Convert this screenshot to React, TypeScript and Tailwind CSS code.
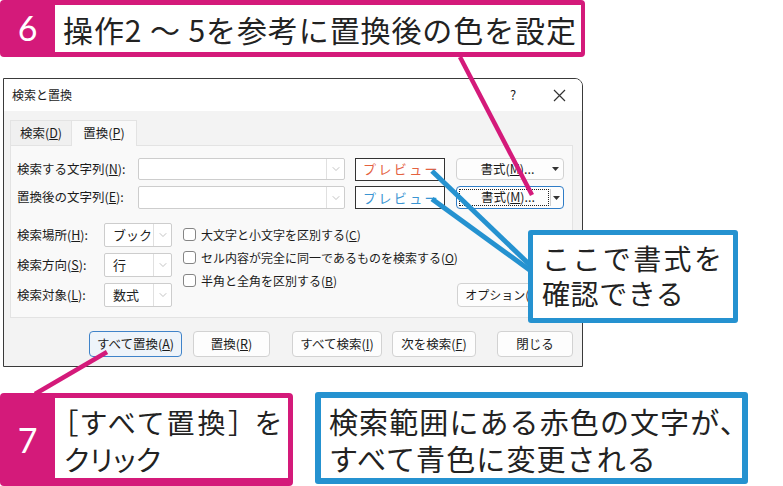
import React from 'react';
import { ChevronDown } from 'lucide-react';

const MAGENTA = '#d41a7a';
const BLUE = '#2592d0';

const Caret = () => (
  <svg width="7" height="4" viewBox="0 0 7 4">
    <polygon points="0,0 7,0 3.5,4" fill="#333" />
  </svg>
);

const Combo: React.FC<{ width: string; value?: string; arrow: string }> = ({ width, value, arrow }) => (
  <div className={`${width} flex h-full bg-white border border-[#cdcdcd] rounded-[2px]`}>
    <div className="flex-1 flex items-center pl-[8px] text-[13px] text-[#222]">{value}</div>
    <div className={`${arrow} flex items-center justify-center border-l border-[#e0e0e0]`}>
      <ChevronDown size={12} strokeWidth={1.2} color="#9a9a9a" />
    </div>
  </div>
);

const DlgButton: React.FC<{ w: string; primary?: boolean; children: React.ReactNode }> = ({ w, primary, children }) => (
  <div
    className={`${w} h-[26px] flex items-center justify-center rounded-[4px] text-[12.5px] text-[#1b1b1b] ${
      primary ? 'border border-[#3f83c9] bg-[#eef4fa]' : 'border border-[#d2d2d2] bg-[#fdfdfd]'
    }`}
  >
    {children}
  </div>
);

const Check: React.FC<{ children: React.ReactNode }> = ({ children }) => (
  <div className="h-[23px] flex items-center gap-[5px] text-[12px] text-[#1b1b1b] whitespace-nowrap">
    <span className="shrink-0 w-[13px] h-[13px] rounded-[3px] border border-[#858585] bg-white" />
    <span>{children}</span>
  </div>
);

export default function App() {
  return (
    <div className="relative w-[783px] h-[486px] overflow-hidden bg-white font-['Noto_Sans_CJK_JP',sans-serif]">
      {/* Step 6 callout */}
      <div className="w-[585px] h-[57px] flex rounded-[4px] pt-[5px] pb-[5px] pr-[4px]" style={{ background: MAGENTA }}>
        <div className="w-[55px] flex items-center justify-center text-white text-[34px] leading-none pb-[2px] font-['Lato',sans-serif]">
          6
        </div>
        <div className="flex-1 bg-white flex items-center pl-[8px] text-[30px] text-[#222] leading-none tracking-[0.9px] whitespace-nowrap">
          操作2 ～ 5を参考に置換後の色を設定
        </div>
      </div>

      {/* Dialog */}
      <div className="ml-[3px] mt-[21px] w-[580px] h-[289px] border border-[#3a3a3a] rounded-tr-[8px] overflow-hidden flex flex-col">
        <div className="h-[32px] bg-white flex items-center text-[12px] text-[#1b1b1b]">
          <span className="pl-[8px]">検索と置換</span>
          <span className="flex-1" />
          <span className="w-[46px] text-center text-[13px]">?</span>
          <span className="w-[46px] flex items-center justify-center">
            <svg width="13" height="13" viewBox="0 0 13 13">
              <path d="M1 1L12 12M12 1L1 12" stroke="#333" strokeWidth="1.2" fill="none" />
            </svg>
          </span>
        </div>
        <div className="flex-1 bg-[#f3f3f3] pl-[6px] pr-[9px] flex flex-col">
          {/* tabs */}
          <div className="mt-[9px] h-[25px] flex text-[12.5px] text-[#1b1b1b]">
            <div className="w-[62px] flex items-center justify-center border border-b-0 border-[#e3e3e3] bg-[#f0f0f0]">
              検索(<u>D</u>)
            </div>
            <div className="w-[65px] flex items-center justify-center border border-b-0 border-l-0 border-[#e3e3e3] bg-[#f9f9f9] relative z-10 h-[26px]">
              置換(<u>P</u>)
            </div>
          </div>
          {/* panel */}
          <div className="h-[173px] bg-[#f9f9f9] border border-[#e3e3e3] pl-[6px] pt-[12px] flex flex-col">
            <div className="h-[22px] flex items-center text-[12.5px] text-[#1b1b1b]">
              <span className="w-[121px]">検索する文字列(<u>N</u>):</span>
              <Combo width="w-[207px]" arrow="w-[18px]" />
              <div className="ml-[10px] w-[90px] h-[23px] border border-[#333] bg-white flex items-center pl-[7px] text-[13px] tracking-[2.4px] text-[#e4623f]">
                プレビュー
              </div>
              <div className="ml-[11px] w-[108px] h-full flex bg-[#fdfdfd] border border-[#d2d2d2] rounded-[4px]">
                <div className="flex-1 flex items-center justify-center pl-[8px]">
                  書式(<u>M</u>)...
                </div>
                <div className="w-[13px] flex items-center justify-center pr-[2px]">
                  <Caret />
                </div>
              </div>
            </div>
            <div className="mt-[6px] h-[23px] flex items-center text-[12.5px] text-[#1b1b1b]">
              <span className="w-[121px]">置換後の文字列(<u>E</u>):</span>
              <Combo width="w-[207px]" arrow="w-[18px]" />
              <div className="ml-[10px] w-[90px] h-[23px] border border-[#333] bg-white flex items-center pl-[7px] text-[13px] tracking-[2.4px] text-[#3a95d2]">
                プレビュー
              </div>
              <div className="ml-[11px] w-[108px] h-full flex bg-[#fdfdfd] border border-[#2f7cc6] rounded-[4px] p-[2px]">
                <div className="flex-1 flex items-center justify-center pl-[8px] border border-dotted border-[#222]">
                  書式(<u>M</u>)...
                </div>
                <div className="w-[11px] flex items-center justify-center border-l border-[#cfcfcf] ml-[1px]">
                  <Caret />
                </div>
              </div>
            </div>
            {/* options */}
            <div className="mt-[14px] flex text-[12.5px] text-[#1b1b1b]">
              <div className="shrink-0 flex flex-col gap-[6px]">
                {[
                  ['検索場所', 'H', 'ブック'],
                  ['検索方向', 'S', '行'],
                  ['検索対象', 'L', '数式'],
                ].map(([label, key, val]) => (
                  <div key={key} className="h-[24px] flex items-center">
                    <span className="w-[87px]">
                      {label}(<u>{key}</u>):
                    </span>
                    <Combo width="w-[68px]" value={val} arrow="w-[18px]" />
                  </div>
                ))}
              </div>
              <div className="flex-1 min-w-0 ml-[11px] flex flex-col">
                <Check>大文字と小文字を区別する(<u>C</u>)</Check>
                <Check>セル内容が完全に同一であるものを検索する(<u>O</u>)</Check>
                <Check>半角と全角を区別する(<u>B</u>)</Check>
              </div>
              <div className="shrink-0 mr-[7px] self-end w-[108px] h-[24px] flex items-center justify-center bg-[#fdfdfd] border border-[#d2d2d2] rounded-[4px] text-[12px] whitespace-nowrap">
                オプション(<u>T</u>) &lt;&lt;
              </div>
            </div>
          </div>
          {/* buttons */}
          <div className="mt-[13px] flex">
            <div className="ml-[79px]">
              <DlgButton w="w-[93px]" primary>
                すべて置換(<u>A</u>)
              </DlgButton>
            </div>
            <div className="ml-[11px]">
              <DlgButton w="w-[77px]">
                置換(<u>R</u>)
              </DlgButton>
            </div>
            <div className="ml-[22px]">
              <DlgButton w="w-[90px]">
                すべて検索(<u>I</u>)
              </DlgButton>
            </div>
            <div className="ml-[10px]">
              <DlgButton w="w-[84px]">
                次を検索(<u>F</u>)
              </DlgButton>
            </div>
            <div className="ml-[21px]">
              <DlgButton w="w-[76px]">閉じる</DlgButton>
            </div>
          </div>
        </div>
      </div>

      {/* bottom callouts */}
      <div className="mt-[25px] flex items-start gap-[22px]">
        <div className="mt-[1px] w-[293px] h-[93px] flex rounded-[4px] pt-[5px] pb-[8px] pr-[5px]" style={{ background: MAGENTA }}>
          <div className="w-[55px] flex items-center justify-center text-white text-[34px] leading-none pt-[4px] font-['Lato',sans-serif]">
            7
          </div>
          <div className="flex-1 bg-white pl-[9px] pt-[6px] text-[28px] leading-[37px] text-[#222] [font-feature-settings:'palt']">
            <div className="tracking-[3px] whitespace-nowrap">［すべて置換］ を</div>
            <div className="tracking-[0.6px]">クリック</div>
          </div>
        </div>
        <div className="w-[433px] h-[92px] rounded-[3px] p-[6px]" style={{ background: BLUE }}>
          <div className="h-full bg-white pl-[8px] pt-[5px] text-[29px] leading-[37px] text-[#222] tracking-[1.1px] whitespace-nowrap">
            <div>検索範囲にある赤色の文字が、</div>
            <div>すべて青色に変更される</div>
          </div>
        </div>
      </div>

      {/* leader lines */}
      <svg className="absolute left-0 top-0 pointer-events-none" width="783" height="486" viewBox="0 0 783 486">
        <line x1="460" y1="57" x2="532" y2="195" stroke={MAGENTA} strokeWidth="4.5" />
        <line x1="107" y1="352" x2="35" y2="394" stroke={MAGENTA} strokeWidth="4.5" />
        <line x1="432" y1="171" x2="531" y2="266" stroke={BLUE} strokeWidth="5" />
        <line x1="432" y1="199" x2="531" y2="271" stroke={BLUE} strokeWidth="5" />
      </svg>

      {/* format callout */}
      <div className="absolute left-[528px] top-[230px] w-[210px] h-[93px] rounded-[3px] p-[5px]" style={{ background: BLUE }}>
        <div className="h-full bg-white pl-[9px] pt-[6px] text-[28px] leading-[35px] text-[#222] whitespace-nowrap">
          <div className="tracking-[2.4px]">ここで書式を</div>
          <div className="tracking-[0.6px]">確認できる</div>
        </div>
      </div>
    </div>
  );
}
